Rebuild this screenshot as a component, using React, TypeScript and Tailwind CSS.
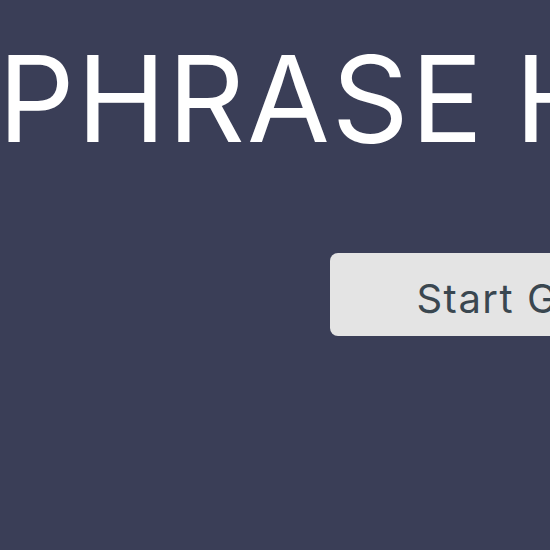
export default function App() {
  return (
    <div className="w-[550px] h-[550px] overflow-hidden bg-[#3a3e57]" style={{ fontFamily: "Inter, 'Open Sans', sans-serif" }}>
      <h1 className="whitespace-nowrap text-white text-[120px] leading-none font-normal pt-[39px] -ml-[2px] tracking-[2px] [word-spacing:-6px]">
        PHRASE HUNTER
      </h1>
      <div className="pt-[94px] pl-[330px]">
        <button className="w-[400px] h-[83px] rounded-lg bg-[#e4e4e4] text-[#3a4750] text-[40px] tracking-[1.5px] whitespace-nowrap pt-[8px]">
          Start Game
        </button>
      </div>
    </div>
  );
}
